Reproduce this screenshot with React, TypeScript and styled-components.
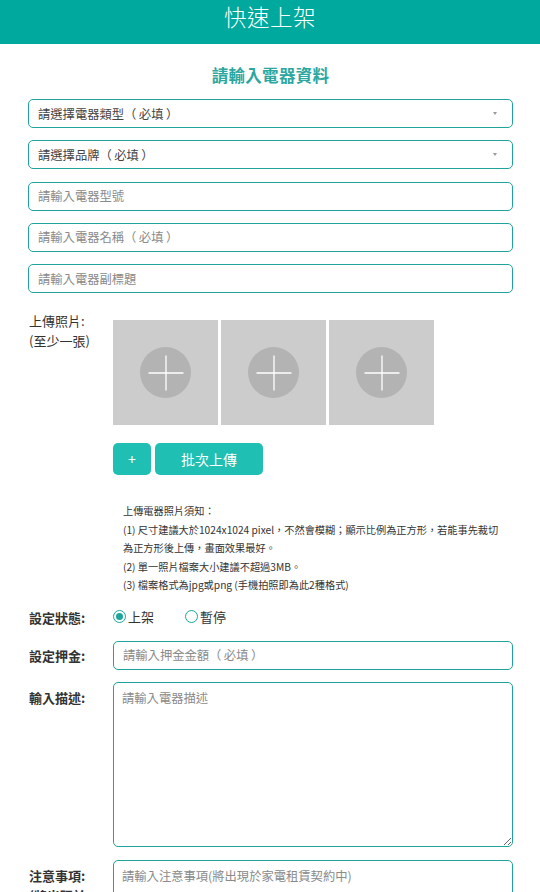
import styled, { createGlobalStyle } from 'styled-components';

const GlobalStyle = createGlobalStyle`
  html, body {
    margin: 0;
    padding: 0;
    background: #ffffff;
  }
  body {
    font-family: "Noto Sans CJK TC", "Noto Sans", "Liberation Sans", sans-serif;
    color: #333333;
  }
  * {
    box-sizing: border-box;
  }
`;

const TEAL = '#20a39b';

const Header = styled.header`
  height: 44px;
  background: #00a99d;
  color: #ffffff;
  text-align: center;
  font-size: 22.5px;
  font-weight: 300;
  line-height: 32px;
  letter-spacing: 0.5px;
`;

const Page = styled.main`
  padding: 0 27px 40px 28px;
`;

const Subtitle = styled.h2`
  margin: 21px 0 14px;
  height: 20px;
  line-height: 20px;
  text-align: center;
  font-size: 16.5px;
  font-weight: 700;
  color: #2aa7a0;
  letter-spacing: 0.3px;
`;

const FieldStack = styled.div`
  display: flex;
  flex-direction: column;
  gap: 12.3px;
`;

const SelectWrap = styled.div`
  position: relative;

  &::after {
    content: '';
    position: absolute;
    right: 16px;
    top: 13px;
    border-left: 2.5px solid transparent;
    border-right: 2.5px solid transparent;
    border-top: 3px solid #9a9a9a;
  }
`;

const Select = styled.select`
  display: block;
  width: 100%;
  height: 29px;
  padding: 0 24px 0 9px;
  border: 1px solid ${TEAL};
  border-radius: 5px;
  background: #ffffff;
  appearance: none;
  font-family: inherit;
  font-size: 12.3px;
  color: #444444;
  outline: none;
`;

const TextInput = styled.input`
  display: block;
  width: 100%;
  height: 29px;
  padding: 0 9px;
  border: 1px solid ${TEAL};
  border-radius: 5px;
  background: #ffffff;
  font-family: inherit;
  font-size: 12.3px;
  color: #333333;
  outline: none;

  &::placeholder {
    color: #8a8a8a;
  }
`;

const TextArea = styled.textarea<{ $height: number }>`
  display: block;
  width: 100%;
  height: ${({ $height }) => $height}px;
  padding: 6px 8px;
  border: 1px solid ${TEAL};
  border-radius: 5px;
  background: #ffffff;
  font-family: inherit;
  font-size: 12.3px;
  line-height: 18px;
  color: #333333;
  outline: none;
  resize: vertical;

  &::placeholder {
    color: #8a8a8a;
  }
`;

const Row = styled.div<{ $top: number }>`
  display: grid;
  grid-template-columns: 85px 1fr;
  margin-top: ${({ $top }) => $top}px;
  align-items: start;
`;

const Label = styled.div<{ $strong?: boolean; $pad?: number }>`
  padding-top: ${({ $pad }) => $pad ?? 5}px;
  padding-left: 1px;
  font-size: 13px;
  line-height: 20px;
  font-weight: ${({ $strong }) => ($strong ? 600 : 400)};
  color: #333333;
`;

const UploadArea = styled.div`
  padding-top: 9px;
`;

const PhotoGrid = styled.div`
  display: flex;
  gap: 3px;
`;

const PhotoSlot = styled.button`
  width: 105px;
  height: 105px;
  padding: 0;
  border: none;
  background: #cccccc;
  display: flex;
  align-items: center;
  justify-content: center;
  cursor: pointer;
`;

const PlusCircle = styled.span`
  width: 51px;
  height: 51px;
  border-radius: 50%;
  background: #b3b3b3;
  display: flex;
  align-items: center;
  justify-content: center;
`;

const ButtonRow = styled.div`
  display: flex;
  gap: 4px;
  margin-top: 18px;
`;

const TealButton = styled.button<{ $width: number }>`
  width: ${({ $width }) => $width}px;
  height: 32px;
  border: none;
  border-radius: 5px;
  background: #1fbfb3;
  color: #ffffff;
  font-family: inherit;
  font-size: 14px;
  cursor: pointer;
`;

const Notes = styled.div`
  margin: 27px 0 0 95px;
  font-size: 10.2px;
  line-height: 18.5px;
  color: #333333;
  white-space: nowrap;
`;

const RadioGroup = styled.div`
  display: flex;
  align-items: center;
  gap: 31px;
  height: 20px;
  margin-top: 4px;
`;

const RadioOption = styled.label`
  display: flex;
  align-items: center;
  gap: 2px;
  font-size: 13px;
  line-height: 20px;
  color: #333333;
  cursor: pointer;
`;

const RadioDot = styled.span<{ $checked?: boolean }>`
  width: 13px;
  height: 13px;
  border-radius: 50%;
  border: 1px solid #1ca69c;
  display: flex;
  align-items: center;
  justify-content: center;

  &::after {
    content: '';
    width: 7px;
    height: 7px;
    border-radius: 50%;
    background: ${({ $checked }) => ($checked ? '#1ca69c' : 'transparent')};
  }
`;

const PlusIcon = () => (
  <svg width="36" height="36" viewBox="0 0 36 36">
    <path d="M18 0.5V35.5M0.5 18H35.5" stroke="#ffffff" strokeWidth="1.3" />
  </svg>
);

// thin spaces inside the full-width brackets, as the reference spaces them
const required = '（\u2009必填\u2009）';

const notes = [
  '上傳電器照片須知：',
  '(1) 尺寸建議大於1024x1024 pixel，不然會模糊；顯示比例為正方形，若能事先裁切',
  '為正方形後上傳，畫面效果最好。',
  '(2) 單一照片檔案大小建議不超過3MB。',
  '(3) 檔案格式為jpg或png (手機拍照即為此2種格式)',
];

export default function App() {
  return (
    <>
      <GlobalStyle />
      <Header>快速上架</Header>
      <Page>
        <Subtitle>請輸入電器資料</Subtitle>

        <FieldStack>
          <SelectWrap>
            <Select defaultValue="">
              <option value="">{`請選擇電器類型${required}`}</option>
            </Select>
          </SelectWrap>
          <SelectWrap>
            <Select defaultValue="">
              <option value="">{`請選擇品牌${required}`}</option>
            </Select>
          </SelectWrap>
          <TextInput placeholder="請輸入電器型號" />
          <TextInput placeholder={`請輸入電器名稱${required}`} />
          <TextInput placeholder="請輸入電器副標題" />
        </FieldStack>

        <Row $top={18}>
          <Label $pad={0}>
            上傳照片:
            <br />
            (至少一張)
          </Label>
          <UploadArea>
            <PhotoGrid>
              {[0, 1, 2].map((i) => (
                <PhotoSlot key={i} type="button">
                  <PlusCircle>
                    <PlusIcon />
                  </PlusCircle>
                </PhotoSlot>
              ))}
            </PhotoGrid>
            <ButtonRow>
              <TealButton type="button" $width={38}>
                +
              </TealButton>
              <TealButton type="button" $width={108}>
                批次上傳
              </TealButton>
            </ButtonRow>
          </UploadArea>
        </Row>

        <Notes>
          {notes.map((line) => (
            <div key={line}>{line}</div>
          ))}
        </Notes>

        <Row $top={8}>
          <Label $strong>設定狀態:</Label>
          <RadioGroup>
            <RadioOption>
              <RadioDot $checked />
              上架
            </RadioOption>
            <RadioOption>
              <RadioDot />
              暫停
            </RadioOption>
          </RadioGroup>
        </Row>

        <Row $top={13}>
          <Label $strong>設定押金:</Label>
          <TextInput placeholder={`請輸入押金金額${required}`} />
        </Row>

        <Row $top={12}>
          <Label $strong $pad={6}>輸入描述:</Label>
          <TextArea $height={165} placeholder="請輸入電器描述" />
        </Row>

        <Row $top={13}>
          <Label $strong $pad={6}>
            注意事項:
            <br />
            (將出現於
            <br />
            家電租賃
            <br />
            契約中)
          </Label>
          <TextArea $height={120} placeholder="請輸入注意事項(將出現於家電租賃契約中)" />
        </Row>
      </Page>
    </>
  );
}
